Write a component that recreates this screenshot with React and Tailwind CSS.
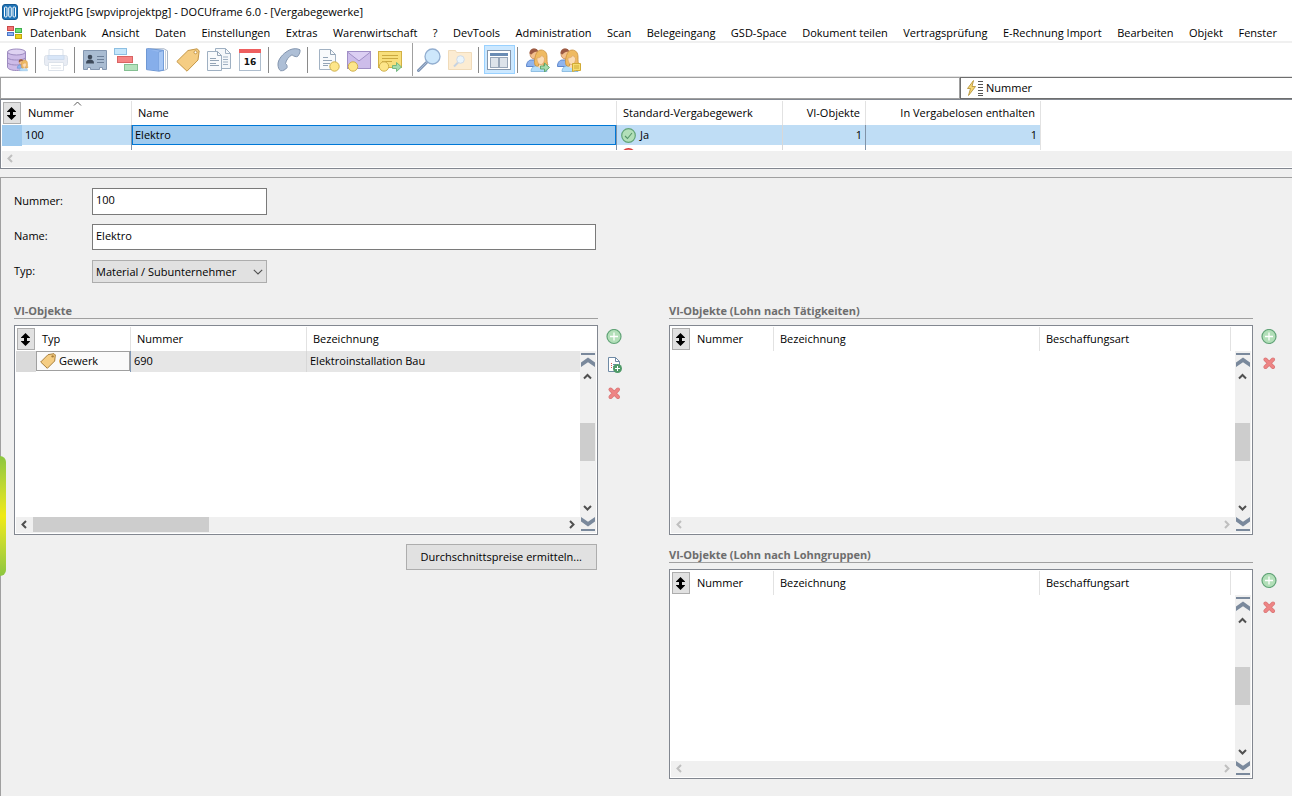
import { clsx } from 'clsx'

const MENU = [
  'Datenbank', 'Ansicht', 'Daten', 'Einstellungen', 'Extras', 'Warenwirtschaft', '?', 'DevTools',
  'Administration', 'Scan', 'Belegeingang', 'GSD-Space', 'Dokument teilen', 'Vertragsprüfung',
  'E-Rechnung Import', 'Bearbeiten', 'Objekt', 'Fenster'
]

/* ---------- Icons ---------- */

function Svg({ children, size = 24, box = 24, className }) {
  return (
    <svg width={size} height={size} viewBox={`0 0 ${box} ${box}`} fill="none" className={clsx('shrink-0', className)} aria-hidden="true">
      {children}
    </svg>
  )
}

function AppIcon() {
  return (
    <Svg size={16} box={16}>
      <rect x="0.5" y="0.5" width="15" height="15" rx="2.5" fill="#1f74b8" stroke="#155a94" />
      <rect x="2.500" y="3" width="2.500" height="10" rx="1" fill="#1f74b8" stroke="#fff" />
      <rect x="6.750" y="3" width="2.500" height="10" rx="1" fill="#1f74b8" stroke="#fff" />
      <rect x="11" y="3" width="2.500" height="10" rx="1" fill="#1f74b8" stroke="#fff" />
    </Svg>
  )
}

function WindowTilesIcon() {
  return (
    <Svg size={16} box={16}>
      <rect x="0.5" y="1.5" width="6" height="4" fill="#f37474" stroke="#c94a4a" />
      <rect x="8.5" y="3.5" width="6" height="4" fill="#6fe07c" stroke="#3fae4d" />
      <rect x="0.5" y="7.5" width="6" height="3" fill="#8fb4f5" stroke="#4c78c8" />
      <rect x="8.5" y="9.5" width="6" height="4" fill="#ecd21c" stroke="#bfa50f" />
    </Svg>
  )
}

function People({ badge }) {
  return (
    <>
      <path d="M.5 18.500c0-4 2-6.500 5-6.500h4v6.500z" fill="#8fb4ee" stroke="#5c86cc" />
      <path d="M4 6c0-3 2-5 4.500-5S12 3 12 6s-1 5-3.500 5S4 9 4 6z" fill="#f3c08e" stroke="#b98052" strokeWidth=".7" />
      <path d="M3.500 5.500C3.500 2 5.500.5 8 .5s4 1 4 3c-3 .3-5 1-6.500 3z" fill="#9c5a43" />
      <path d="M5 23.500c0-4 3-6 8-6s8 2 8 6z" fill="#b3ddfa" stroke="#7fb3dc" strokeWidth=".8" />
      <path d="M12 16h5v2.500c-1 2-4 2-5 0z" fill="#fbdcb5" />
      <path d="M9 17c-1-3-.5-6 .5-9.500C10.500 4 12.500 2 15 2c4 0 6 3 6 7 0 3 0 6 1 8-1 1-3 1.500-4.500 1v-2h-5v2c-1.500.5-3 0-3.500-1z" fill="#efba62" stroke="#c98f3c" strokeWidth=".8" />
      <path d="M11 10c2 0 4-1 5-2.500 1 1 1.500 2 2.500 2.500 0 4-1.500 6.500-3.700 6.500S11 14 11 10z" fill="#fbdcb5" stroke="#d9a066" strokeWidth=".6" />
      {badge === 'arrow' && <path d="M14.500 18h4v-3l5 4.500-5 4.500v-3h-4z" fill="#a5dcae" stroke="#57a468" strokeWidth=".9" />}
      {badge === 'note' && (
        <>
          <path d="M15.500 15.500h8v7h-5l-3 1z" fill="#f7dc6f" stroke="#d0aa35" />
          <path d="M17 18h5M17 20h5" stroke="#d0aa35" />
        </>
      )}
    </>
  )
}

const Coin = ({ x, y }) => (
  <circle cx={x} cy={y} r="4.700" fill="#fde68a" stroke="#cfb04c" />
)

const Arrow = () => <path d="M14.500 17.500h4v-3l5 4.500-5 4.500v-3h-4z" fill="#a5dcae" stroke="#6cb47a" strokeWidth=".9" />

const ICONS = {
  database: (
    <Svg>
      <g transform="translate(1 0)">
        <path d="M1.500 4v15c0 2 4 3.500 9 3.500s9-1.500 9-3.500V4z" fill="#cdbbe8" stroke="#9d8bc0" />
        <path d="M1.500 9c0 2 4 3 9 3s9-1 9-3M1.500 14c0 2 4 3 9 3s9-1 9-3" stroke="#9d8bc0" />
        <ellipse cx="10.500" cy="4" rx="9" ry="3" fill="#ded2f2" stroke="#9d8bc0" />
        <g transform="translate(11 11) scale(.5)"><People /></g>
      </g>
    </Svg>
  ),
  printer: (
    <Svg className="opacity-40">
      <path d="M5 8V1.500h14V8" fill="#fff" stroke="#a9b8cc" />
      <rect x=".5" y="7.500" width="23" height="10" rx="2" fill="#c6d2e4" stroke="#a4b4ca" />
      <path d="M4 7.500h16v4H4z" fill="#9fc2ee" stroke="#89a9d4" />
      <path d="M4.500 14.500h15v8h-15z" fill="#fff" stroke="#a9b8cc" />
      <path d="M7 17.500h10M7 20h10" stroke="#b8c4d4" />
    </Svg>
  ),
  card: (
    <Svg>
      <path d="M.5 2.500h23v19h-4v-2h-3v2h-9v-2h-3v2h-4z" fill="#a9bcd2" stroke="#8497b0" />
      <circle cx="7" cy="9" r="2.300" fill="#3e4a5a" />
      <path d="M3 15.500c0-3 1.500-4 4-4s4 1 4 4z" fill="#3e4a5a" />
      <path d="M14 8.500h7M14 11.500h7M14 14.500h7" stroke="#6c7f98" />
    </Svg>
  ),
  hierarchy: (
    <Svg>
      <rect x=".5" y=".5" width="12" height="6" fill="#c5e6fb" stroke="#8dbfe2" />
      <rect x="3.500" y="8.500" width="15" height="6" fill="#f58484" stroke="#d96464" />
      <rect x="10.500" y="16.500" width="13" height="6" fill="#b4e2bd" stroke="#84c092" />
    </Svg>
  ),
  book: (
    <Svg>
      <path d="M3 .8h16l3.500 2v18l-3 1.500H13z" fill="#fff" stroke="#a9b6c8" />
      <path d="M20.500 2.500v19" stroke="#c9d1dc" />
      <path d="M1.500.8h3l14 1.500v20l-5 .8-12-1.500z" fill="#94b8ee" stroke="#6e98d4" />
      <path d="M13.500 4l5-1.500v19.500l-5 1z" fill="#a5c6f5" stroke="#6e98d4" strokeWidth=".8" />
      <path d="M2 1l11.500 3v18.500L2 21z" fill="#86aeea" />
    </Svg>
  ),
  tag: (
    <Svg>
      <path d="M.8 13.500L12 2.500 21 .8l2.200 2L22 12 11 23.200z" fill="#f5cd83" stroke="#c49748" strokeLinejoin="round" />
      <circle cx="19.500" cy="4.300" r="1.500" fill="#fff" stroke="#c49748" />
    </Svg>
  ),
  documents: (
    <Svg>
      <path d="M8.500.5h10l5 5v15h-15z" fill="#f4f7fa" stroke="#9fb0c2" />
      <path d="M18.500.5v5h5M16 9h5M16 11.500h5M16 14h5M16 16.500h5" stroke="#9fb0c2" />
      <path d="M.5 3.500h10l4 4v15H.500z" fill="#f8fafc" stroke="#9fb0c2" />
      <path d="M10.500 3.500v4h4M3 10.500h6M3 12.500h9M3 15.500h6M3 17.500h9" stroke="#93a4b6" />
    </Svg>
  ),
  calendar: (
    <Svg>
      <rect x="1.500" y="1.500" width="21" height="21" fill="#fff" stroke="#aebdcd" />
      <path d="M1 1h22v4H1z" fill="#ee5f5f" />
      <text x="12" y="17" textAnchor="middle" fontSize="9" fontWeight="700" fill="#111" fontFamily="DejaVu Sans">16</text>
    </Svg>
  ),
  phone: (
    <Svg>
      <path d="M1 17c-.5-5 4.500-11.500 11.500-15C16 .3 20.500.3 23 1.800c.4 2-.5 4.500-2.500 6.700-1 .6-4-.2-5.500-1.700-3 1.500-6 5.500-6.500 8.700 1.200.8 2 2.500 1.500 4.200-1.500 1.800-4 3.500-6.500 3C1.800 21.500 1.200 19.500 1 17z" fill="#aebfd6" stroke="#8395ae" />
    </Svg>
  ),
  docCoin: (
    <Svg>
      <path d="M3.500 1.500h11l5 5v15h-16z" fill="#f8fafc" stroke="#a2b2c3" />
      <path d="M14.500 1.500v5h5M7 9.500h5M7 12.500h9M7 15.500h7M7 17.500h5" stroke="#93a4b6" />
      <Coin x={18.5} y={18.5} />
    </Svg>
  ),
  mailCoin: (
    <Svg>
      <rect x=".5" y="3.500" width="23" height="17" fill="#cdbdea" stroke="#a08fc6" />
      <path d="M.5 4l11.500 9L23.500 4" fill="#dccff3" stroke="#a08fc6" />
      <Coin x={6} y={18.5} />
    </Svg>
  ),
  noteArrow: (
    <Svg>
      <rect x=".5" y="3.500" width="23" height="16" fill="#f8df7c" stroke="#d3b144" />
      <path d="M4 7.500h16M4 10.500h16M4 13.500h10" stroke="#cba941" />
      <Coin x={6} y={18.5} />
      <Arrow />
    </Svg>
  ),
  search: (
    <Svg>
      <path d="M9.500 14.500L1.500 22.500" stroke="#7f95b5" strokeWidth="3" strokeLinecap="round" />
      <path d="M9.500 14.500L1.500 22.500" stroke="#a9bcd6" strokeLinecap="round" />
      <circle cx="15.500" cy="8.500" r="7.500" fill="#cde7fb" stroke="#92aed0" strokeWidth="1.300" />
    </Svg>
  ),
  folderSearch: (
    <Svg className="opacity-50">
      <path d="M.5 2.500h7l1 2h15v17H.500z" fill="#fbdba6" stroke="#e2b878" />
      <path d="M10 14.500l-4 4" stroke="#8fa6c4" strokeWidth="2" />
      <circle cx="12.500" cy="11.500" r="3.800" fill="#d7ecfb" stroke="#9db6d2" />
    </Svg>
  ),
  layout: (
    <Svg>
      <rect x=".5" y="2.500" width="23" height="19" fill="#fff" stroke="#8496ac" />
      <rect x="3" y="5" width="18" height="3" fill="#6a8cb4" />
      <rect x="3.500" y="9.500" width="8" height="10" fill="#dde3ea" stroke="#98a6b8" />
      <rect x="12.500" y="9.500" width="8" height="10" fill="#dde3ea" stroke="#98a6b8" />
    </Svg>
  ),
  usersForward: <Svg><People badge="arrow" /></Svg>,
  usersNote: <Svg><People badge="note" /></Svg>
}

const PlusIcon = () => (
  <Svg size={16} box={16}>
    <circle cx="8" cy="7.500" r="7" fill="#b2dfb8" stroke="#62a478" strokeWidth="1.200" />
    <path d="M8 3.500v8M4 7.500h8" stroke="#fff" strokeWidth="1.300" />
  </Svg>
)

const CrossIcon = () => (
  <Svg size={16} box={16}>
    <path d="M4.500 4.500l7.500 7.500M12 4.500l-7.500 7.500" stroke="#d97878" strokeWidth="4" strokeLinecap="round" />
    <path d="M4.500 4.500l7.500 7.500M12 4.500l-7.500 7.500" stroke="#ee8585" strokeWidth="2.500" strokeLinecap="round" />
  </Svg>
)

const DocPlusIcon = () => (
  <Svg size={16} box={16}>
    <path d="M2.500.5h7l4 4v10h-11z" fill="#fff" stroke="#6f8aa5" />
    <path d="M9.500.5v4h4M7 7.500h3M7 9.500h2" stroke="#6f8aa5" />
    <path d="M5 6.500h1M5 8.500h1M5 10.500h1" stroke="#d65a5a" />
    <circle cx="11.500" cy="11.500" r="4.500" fill="#4f9a68" />
    <path d="M11.500 9v5M9 11.500h5" stroke="#fff" />
  </Svg>
)

const CheckIcon = () => (
  <Svg size={15} box={15}>
    <circle cx="7.500" cy="7.500" r="6.800" fill="#b2dfb8" stroke="#62a478" strokeWidth="1.200" />
    <path d="M4 8l2.500 2.500L11 5" stroke="#55946a" strokeWidth="1.100" />
  </Svg>
)

const NoIcon = () => (
  <Svg size={15} box={15}>
    <circle cx="7.500" cy="7.500" r="6.800" fill="#f4a3a3" stroke="#d83a3a" strokeWidth="1.400" />
  </Svg>
)

const SmallTagIcon = () => (
  <Svg size={16} box={24}>
    <path d="M1 13.500L12 2.500 21 1l2 2-1 9-11 11z" fill="#f5cd83" stroke="#a87f3c" strokeWidth="1.500" strokeLinejoin="round" />
    <circle cx="19" cy="5" r="1.800" fill="#a87f3c" />
  </Svg>
)

const BoltIcon = () => (
  <Svg size={18} box={18}>
    <path d="M7.500 1.500L1.500 9.500h3l-2 7 7-9h-3.500z" fill="#f7d774" stroke="#b8963e" strokeWidth=".9" />
    <path d="M12 2.500h5M12 5.500h5M12 8.500h5M12 11.500h5M12 14.500h5M12 16.500h5" stroke="#555" />
  </Svg>
)

const CHEVRONS = {
  up: 'M1 6.500L4.500 3 8 6.500',
  down: 'M1 3L4.500 6.500 8 3',
  left: 'M6 1L2.500 4.500 6 8',
  right: 'M3 1l3.500 3.500L3 8'
}

function ArrowButton({ dir, disabled, className }) {
  const labels = { up: 'Nach oben', down: 'Nach unten', left: 'Nach links', right: 'Nach rechts' }
  return (
    <button type="button" disabled={disabled} aria-label={labels[dir]} className={clsx('flex shrink-0 items-center justify-center', className)}>
      <Svg size={9} box={9}>
        <path d={CHEVRONS[dir]} stroke={disabled ? '#bfbfbf' : '#505050'} strokeWidth="2" />
      </Svg>
    </button>
  )
}

function JumpButton({ end }) {
  return (
    <button type="button" aria-label={end ? 'Zum Ende' : 'Zum Anfang'} className="flex h-[17px] w-[15px] shrink-0 items-center">
      <svg width="15" height="17" viewBox="0 0 15 17" aria-hidden="true">
        <g transform={end ? 'matrix(1 0 0 -1 0 17)' : undefined} fill="#7a899c">
          <path d="M1 2h14v2H1z" />
          <path d="M1 16v-4.500L8 6.500l7 5V16l-7-4.700z" />
        </g>
      </svg>
    </button>
  )
}

/* ---------- Grid parts ---------- */

function FitButton() {
  return (
    <button type="button" aria-label="Spalten anpassen" className="ml-px flex h-[22px] w-[18px] items-center justify-center border border-[#adadad] bg-[#e1e1e1] pr-px">
      <svg width="9" height="13" viewBox="0 0 9 13" aria-hidden="true">
        <path d="M4.500 0L9 4.500V5H6v3h3v.5L4.500 13 0 8.500V8h3V5H0v-.5z" fill="#000" />
      </svg>
    </button>
  )
}

function HeadCell({ children, right, className }) {
  return (
    <th scope="col" className={clsx('relative h-6 border-r border-[#e2e2e2] p-0 px-[5px] font-normal', right ? 'text-right' : 'pl-[6px] text-left', className)}>
      {children}
    </th>
  )
}

function ObjectGrid({ columns, children, canScroll, label }) {
  return (
    <div className="flex h-[210px] min-w-0 flex-1 border border-[#828790] bg-white p-px">
      <div className="flex min-w-0 flex-1 flex-col">
        <div className="flex-1 overflow-hidden">
          <table aria-label={label} className="w-full table-fixed border-separate border-spacing-0">
            {columns}
            {children}
          </table>
        </div>
        <div className="flex h-4 items-start bg-[#f0f0f0]">
          <ArrowButton dir="left" disabled={!canScroll} className="h-[15px] w-[17px]" />
          <div className="flex-1">
            {canScroll && <div className="h-[15px] w-[176px] bg-[#cdcdcd]" />}
          </div>
          <ArrowButton dir="right" disabled={!canScroll} className="h-[15px] w-[17px]" />
        </div>
      </div>
      <div className="mt-6 flex w-4 flex-col bg-[#f0f0f0]">
        <JumpButton />
        <ArrowButton dir="up" className="h-[17px] w-[15px]" />
        <div className="flex flex-1 flex-col justify-center">
          <div className="h-[38px] w-[15px] bg-[#cdcdcd]" />
        </div>
        <ArrowButton dir="down" className="h-[17px] w-[15px]" />
        <JumpButton end />
      </div>
    </div>
  )
}

function WageGrid({ label }) {
  return (
    <ObjectGrid
      label={label}
      columns={
        <colgroup>
          <col className="w-[20px]" />
          <col className="w-[83px]" />
          <col className="w-[266px]" />
          <col className="w-[191px]" />
          <col />
        </colgroup>
      }
    >
      <thead>
        <tr>
          <th className="p-0"><FitButton /></th>
          <HeadCell>Nummer</HeadCell>
          <HeadCell>Bezeichnung</HeadCell>
          <HeadCell>Beschaffungsart</HeadCell>
          <th className="p-0" />
        </tr>
      </thead>
    </ObjectGrid>
  )
}

function Section({ title, actions, gap, children }) {
  return (
    <section>
      <h2 className="mr-6 h-4 border-b border-[#a0a0a0] font-bold text-[#6d6d6d]">{title}</h2>
      <div className="mt-1.5 flex gap-2">
        {children}
        <div className={clsx('flex w-4 flex-col pt-1', gap)}>{actions}</div>
      </div>
    </section>
  )
}

function SideButton({ label, children }) {
  return <button type="button" aria-label={label} className="size-4">{children}</button>
}

/* ---------- Window parts ---------- */

function Tool({ icon, label, active }) {
  return (
    <button
      type="button"
      aria-label={label}
      aria-pressed={active}
      className={clsx('flex h-[29px] w-[31px] shrink-0 items-center justify-center pr-px', active && 'border border-[#99d1ff] bg-[#cce8ff]')}
    >
      {ICONS[icon]}
    </button>
  )
}

const Divider = () => <div className="mr-[5px] ml-0.5 h-[26px] w-px shrink-0 bg-[#8a8a8a]" />

function Toolbar() {
  return (
    <div className="flex h-[34px] items-center border-b border-[#e3e3e3] pl-0.5">
      <Tool icon="database" label="Datenbank" />
      <Divider />
      <Tool icon="printer" label="Drucken" />
      <Divider />
      <Tool icon="card" label="Adressen" />
      <Tool icon="hierarchy" label="Projekte" />
      <Tool icon="book" label="Buch" />
      <Tool icon="tag" label="Artikel" />
      <Tool icon="documents" label="Dokumente" />
      <Tool icon="calendar" label="Kalender" />
      <Divider />
      <Tool icon="phone" label="Telefon" />
      <Divider />
      <Tool icon="docCoin" label="Neues Dokument" />
      <Tool icon="mailCoin" label="Neue E-Mail" />
      <Tool icon="noteArrow" label="Neue Notiz" />
      <div className="mr-px ml-1.5 w-px self-stretch bg-[#a0a0a0]" />
      <Tool icon="search" label="Suchen" />
      <Tool icon="folderSearch" label="Ordner durchsuchen" />
      <Divider />
      <Tool icon="layout" label="Ansicht" active />
      <Divider />
      <Tool icon="usersForward" label="Weiterleiten" />
      <Tool icon="usersNote" label="Benutzernotiz" />
    </div>
  )
}

function TradeTable() {
  const cell = 'h-[21px] p-0 align-top border-r'
  const inner = 'flex h-5 items-center'
  return (
    <div className="border-t border-b border-l border-[#828790] bg-white pt-px pl-px">
      <div className="h-[49px] overflow-hidden">
        <table aria-label="Vergabegewerke" className="w-full table-fixed border-separate border-spacing-0">
          <colgroup>
            <col className="w-[20px]" />
            <col className="w-[110px]" />
            <col className="w-[485px]" />
            <col className="w-[166px]" />
            <col className="w-[83px]" />
            <col className="w-[175px]" />
            <col />
          </colgroup>
          <thead>
            <tr>
              <th className="p-0"><FitButton /></th>
              <HeadCell>
                Nummer
                <svg width="9" height="5" viewBox="0 0 9 5" className="absolute top-0 right-[49px]" aria-hidden="true">
                  <path d="M1 4.500L4.500 1 8 4.500" fill="none" stroke="#5a5a5a" />
                </svg>
              </HeadCell>
              <HeadCell>Name</HeadCell>
              <HeadCell>Standard-Vergabegewerk</HeadCell>
              <HeadCell right>VI-Objekte</HeadCell>
              <HeadCell right>In Vergabelosen enthalten</HeadCell>
              <th className="p-0" />
            </tr>
          </thead>
          <tbody>
            <tr>
              <td className="bg-[#9fcaee] p-0" />
              <td className={clsx(cell, 'border-[#8093a8]')}><div className={clsx(inner, 'bg-[#bfddf5] px-[3px]')}>100</div></td>
              <td className={clsx(cell, 'border-[#8093a8]')}><div className="flex h-5 items-center border border-[#0078d7] bg-[#a0cbef] px-0.5">Elektro</div></td>
              <td className={clsx(cell, 'border-[#d8d8d8]')}><div className={clsx(inner, 'gap-1 bg-[#bfddf5] px-1')}><CheckIcon />Ja</div></td>
              <td className={clsx(cell, 'border-[#8093a8]')}><div className={clsx(inner, 'justify-end bg-[#bfddf5] px-[3px]')}>1</div></td>
              <td className={clsx(cell, 'border-[#e2e2e2]')}><div className={clsx(inner, 'justify-end bg-[#bfddf5] px-[3px]')}>1</div></td>
              <td className="p-0" />
            </tr>
            <tr>
              <td className="p-0" />
              <td className={clsx(cell, 'border-[#8093a8]')} />
              <td className={clsx(cell, 'border-[#8093a8]')} />
              <td className={clsx(cell, 'border-[#d8d8d8]')}><div className="flex h-5 items-start px-1 pt-0.5"><NoIcon /></div></td>
              <td className={clsx(cell, 'border-[#8093a8]')} />
              <td className={clsx(cell, 'border-[#e2e2e2]')} />
              <td className="p-0" />
            </tr>
          </tbody>
        </table>
      </div>
      <div className="mt-px mb-px flex h-4 items-start bg-[#f0f0f0]">
        <ArrowButton dir="left" disabled className="h-[15px] w-[17px]" />
      </div>
    </div>
  )
}

function DetailForm() {
  const label = 'w-[78px] shrink-0 pb-0.5'
  return (
    <form className="flex flex-col items-start" onSubmit={(e) => e.preventDefault()}>
      <div className="flex items-center">
        <label htmlFor="nummer" className={label}>Nummer:</label>
        <input id="nummer" defaultValue="100" className="h-[27px] w-[175px] border border-[#7a7a7a] bg-white px-[3px] pb-1 outline-none" />
      </div>
      <div className="mt-[9px] flex items-center">
        <label htmlFor="name" className={label}>Name:</label>
        <input id="name" defaultValue="Elektro" className="h-[26px] w-[504px] border border-[#7a7a7a] bg-white px-[3px] pb-1 outline-none" />
      </div>
      <div className="mt-2.5 flex items-center">
        <label htmlFor="typ" className={label}>Typ:</label>
        <div className="relative">
          <select id="typ" defaultValue="ms" className="h-[23px] w-[175px] appearance-none border border-[#adadad] bg-[#e1e1e1] px-[3px] outline-none">
            <option value="ms">Material / Subunternehmer</option>
          </select>
          <svg width="10" height="6" viewBox="0 0 10 6" className="pointer-events-none absolute top-[9px] right-1" aria-hidden="true">
            <path d="M.8 .8L5 5 9.200 .8" fill="none" stroke="#505050" strokeWidth="1.100" />
          </svg>
        </div>
      </div>
    </form>
  )
}

export default function App() {
  return (
    <div className="relative flex min-h-screen flex-col overflow-x-hidden bg-[#f0f0f0] font-['Open_Sans',sans-serif] text-[11px] leading-4 text-black">
      <header className="bg-white">
        <div className="flex h-[23px] items-center gap-[5px] pl-0.5">
          <AppIcon />
          <h1>ViProjektPG [swpviprojektpg] - DOCUframe 6.0 - [Vergabegewerke]</h1>
        </div>
        <nav className="flex h-5 items-end border-b-2 border-[#f0f0f0] pr-[15px] pl-[7px] whitespace-nowrap">
          <WindowTilesIcon />
          <div className="ml-[7px] flex flex-1 justify-between">
            {MENU.map((item) => (
              <button key={item} type="button">{item}</button>
            ))}
          </div>
        </nav>
        <Toolbar />
        <div className="flex h-[22px]">
          <input aria-label="Suchbegriff" className="min-w-0 flex-1 border border-[#a0a0a0] px-1 outline-none" />
          <button type="button" className="flex w-[332px] items-center gap-0.5 border-y border-l border-[#6e6e6e] pl-[5px]">
            <BoltIcon />
            <span>Nummer</span>
          </button>
        </div>
      </header>

      <TradeTable />

      <main className="mt-2 flex-1 border-t border-l border-[#a0a0a0] pt-2.5 pr-[15px] pb-4 pl-[13px]">
        <DetailForm />
        <div className="mt-5 grid grid-cols-2 gap-x-[47px]">
          <div>
            <Section
              title="VI-Objekte"
              gap="gap-3"
              actions={
                <>
                  <SideButton label="Hinzufügen"><PlusIcon /></SideButton>
                  <SideButton label="Neu anlegen"><DocPlusIcon /></SideButton>
                  <SideButton label="Entfernen"><CrossIcon /></SideButton>
                </>
              }
            >
              <ObjectGrid
                label="VI-Objekte"
                canScroll
                columns={
                  <colgroup>
                    <col className="w-[20px]" />
                    <col className="w-[95px]" />
                    <col className="w-[176px]" />
                    <col />
                  </colgroup>
                }
              >
                <thead>
                  <tr>
                    <th className="p-0"><FitButton /></th>
                    <HeadCell>Typ</HeadCell>
                    <HeadCell>Nummer</HeadCell>
                    <HeadCell className="border-r-0">Bezeichnung</HeadCell>
                  </tr>
                </thead>
                <tbody>
                  <tr>
                    <td className="bg-[#dadada] p-0" />
                    <td className="h-[21px] border-r border-[#7f97b5] p-0 align-top">
                      <div className="flex h-5 items-center gap-[3px] border border-[#a0a0a0] bg-[#fafafa] px-[3px]"><SmallTagIcon />Gewerk</div>
                    </td>
                    <td className="border-r border-[#d8d8d8] bg-[#e6e6e6] p-0 px-[3px] align-top leading-5">690</td>
                    <td className="bg-[#e6e6e6] p-0 px-[3px] align-top leading-5">Elektroinstallation Bau</td>
                  </tr>
                </tbody>
              </ObjectGrid>
            </Section>
            <div className="mt-[9px] mr-[25px] flex justify-end">
              <button type="button" className="h-[26px] border border-[#adadad] bg-[#e1e1e1] px-[14px]">Durchschnittspreise ermitteln...</button>
            </div>
          </div>

          <div className="flex flex-col gap-3">
            {['VI-Objekte (Lohn nach Tätigkeiten)', 'VI-Objekte (Lohn nach Lohngruppen)'].map((title) => (
              <Section
                key={title}
                title={title}
                gap="gap-[10px]"
                actions={
                  <>
                    <SideButton label="Hinzufügen"><PlusIcon /></SideButton>
                    <SideButton label="Entfernen"><CrossIcon /></SideButton>
                  </>
                }
              >
                <WageGrid label={title} />
              </Section>
            ))}
          </div>
        </div>
      </main>

      {/* Docked slide-out handle on the window edge */}
      <div className="absolute top-[456px] left-0 h-[120px] w-1.5 rounded-r-md bg-linear-to-b from-[#8cc63f] via-[#f0ea12] to-[#8cc63f]" />
    </div>
  )
}
